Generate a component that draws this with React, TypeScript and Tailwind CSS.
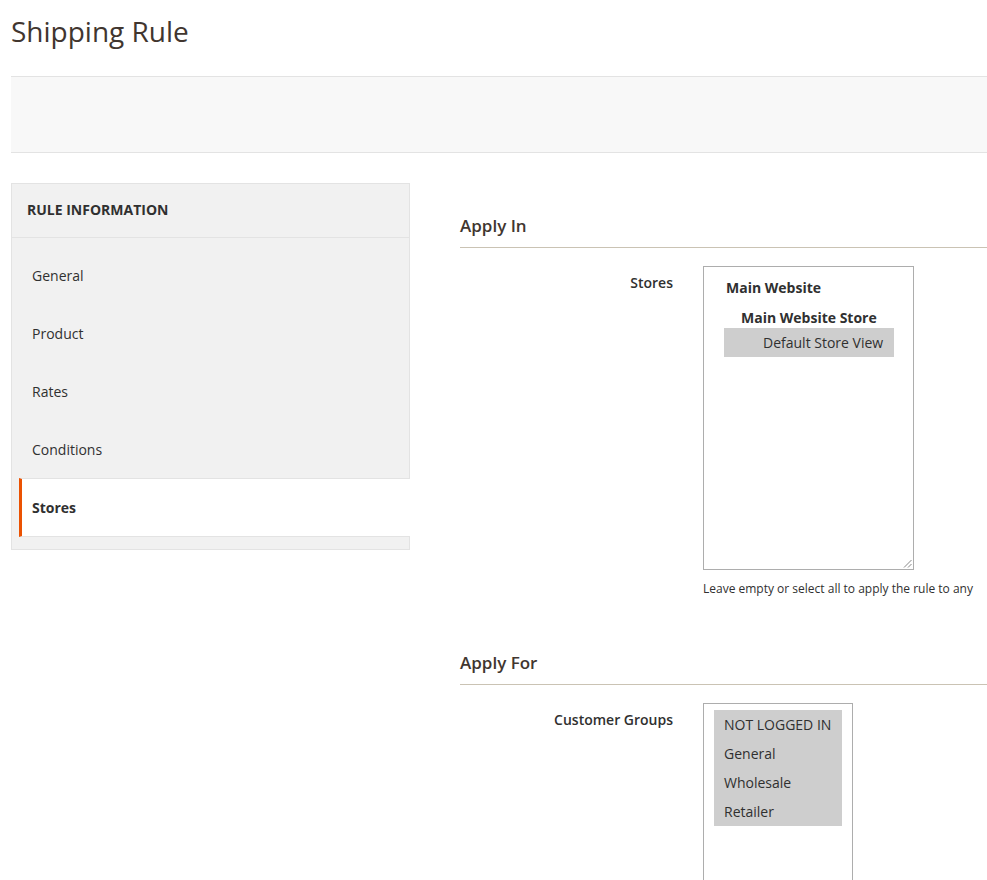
import React from "react";

const navItems = ["General", "Product", "Rates", "Conditions"];
const groups = ["NOT LOGGED IN", "General", "Wholesale", "Retailer"];

export default function App() {
  return (
    <div
      className="min-h-[880px] w-full overflow-hidden bg-white pl-[11px] text-[14px] text-[#303030]"
      style={{ fontFamily: '"Open Sans", "Liberation Sans", sans-serif' }}
    >
      <h1 className="pt-[13px] text-[28px] font-normal leading-[36px] text-[#41362f]">
        Shipping Rule
      </h1>
      <div className="mt-[27px] h-[77px] border-y border-[#e3e3e3] bg-[#f8f8f8]" />

      <div className="mt-[30px] flex items-start gap-[50px]">
        {/* Sidebar */}
        <aside className="w-[399px] shrink-0 border border-[#e3e3e3] bg-[#f1f1f1]">
          <div className="flex h-[54px] items-center border-b border-[#e3e3e3] pb-[2px] pl-[15px] text-[14px] font-bold uppercase leading-[20px] text-[#303030]">
            Rule Information
          </div>
          <ul className="pb-[12px] pl-[7px] pt-[9px]">
            {navItems.map((item) => (
              <li
                key={item}
                className="flex h-[58px] items-center pl-[13px] leading-[20px] text-[#303030]"
              >
                {item}
              </li>
            ))}
            <li className="-mr-px -mt-px flex h-[59px] items-center border-y border-l-[3px] border-[#e3e3e3] border-l-[#eb5202] bg-white pl-[10px] font-bold leading-[20px] text-[#303030]">
              Stores
            </li>
          </ul>
        </aside>

        {/* Main */}
        <main className="min-w-0 flex-1">
          <h2 className="mt-[31px] border-b border-[#cac3b4] pb-[9px] text-[17px] font-semibold leading-[24px] text-[#41362f]">
            Apply In
          </h2>
          <div className="mt-[18px] flex gap-[30px]">
            <label className="w-[213px] shrink-0 pt-[7px] text-right font-semibold leading-[20px] text-[#303030]">
              Stores
            </label>
            <div>
              <div className="relative h-[304px] w-[211px] border border-[#adadad] bg-white px-[10px] pt-[6px]">
                <div className="h-[29px] pl-[12px] font-bold leading-[29px]">Main Website</div>
                <div className="h-[26px] pl-[27px] font-bold leading-[32px]">Main Website Store</div>
                <div className="ml-[10px] mr-[9px] h-[29px] bg-[#cecece] pl-[39px] leading-[29px]">
                  Default Store View
                </div>
                <svg
                  className="absolute bottom-[1px] right-[1px]"
                  width="9"
                  height="9"
                  viewBox="0 0 9 9"
                >
                  <line x1="1" y1="8.5" x2="8.5" y2="1" stroke="#888" strokeWidth="1" />
                  <line x1="5" y1="8.5" x2="8.5" y2="5" stroke="#888" strokeWidth="1" />
                </svg>
              </div>
              <p className="mt-[11px] whitespace-nowrap text-[12px] leading-[16px] text-[#303030]">
                Leave empty or select all to apply the rule to any
              </p>
            </div>
          </div>

          <h2 className="mt-[54px] border-b border-[#cac3b4] pb-[9px] text-[17px] font-semibold leading-[24px] text-[#41362f]">
            Apply For
          </h2>
          <div className="mt-[18px] flex gap-[30px]">
            <label className="w-[213px] shrink-0 pt-[7px] text-right font-semibold leading-[20px] text-[#303030]">
              Customer Groups
            </label>
            <div className="h-[220px] w-[150px] border border-[#adadad] bg-white px-[10px] pt-[6px]">
              <div className="bg-[#cecece]">
                {groups.map((g) => (
                  <div key={g} className="h-[29px] whitespace-nowrap pl-[10px] leading-[29px]">
                    {g}
                  </div>
                ))}
              </div>
            </div>
          </div>
        </main>
      </div>
    </div>
  );
}
